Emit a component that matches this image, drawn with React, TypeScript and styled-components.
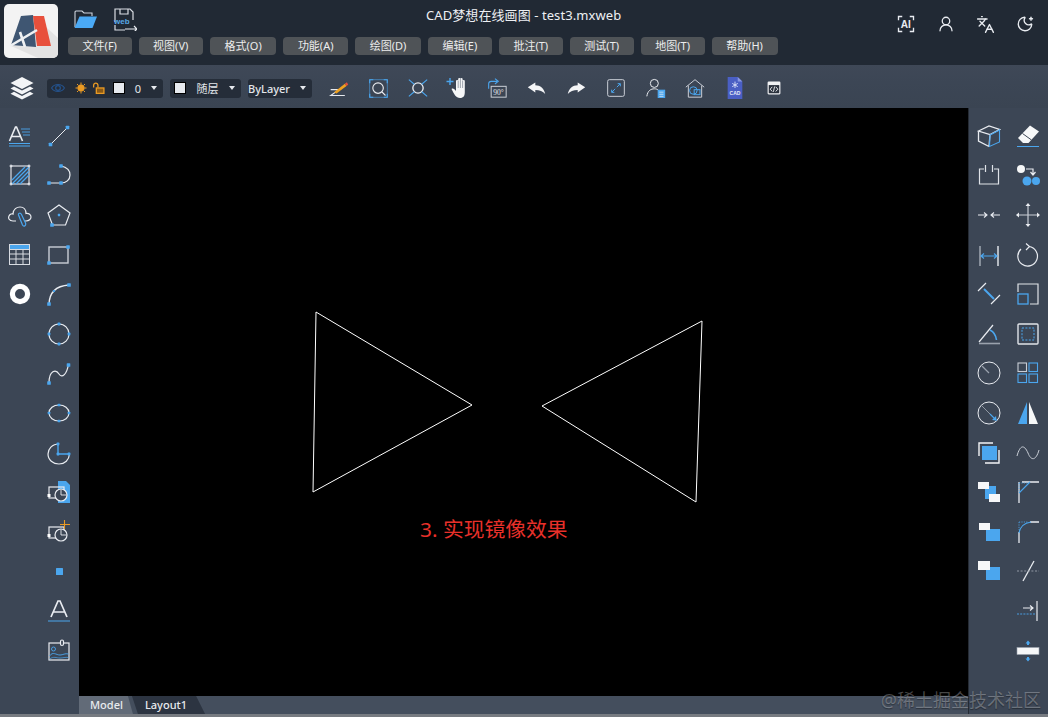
import React from 'react';
import styled, { createGlobalStyle } from 'styled-components';
import { Languages, MoonStar, UserRound } from 'lucide-react';

const WHITE = '#e9ecf1';
const BLUE = '#4ba6ee';
const DARK = '#212934';
const PANEL = '#3c4655';

const GlobalStyle = createGlobalStyle`
  html, body {
    margin: 0;
    height: 100%;
    overflow: hidden;
    background: ${DARK};
  }
  body {
    font-family: "Noto Sans", "Noto Sans CJK SC", sans-serif;
  }
`;

const Page = styled.div`
  display: flex;
  flex-direction: column;
  height: 717px;
  width: 1048px;
`;

/* top title bar */
const Header = styled.header`
  display: flex;
  height: 65px;
  flex: none;
  background: ${DARK};
  box-sizing: border-box;
  padding: 4px 0 0 4px;
  gap: 10px;
`;

const Logo = styled.div`
  width: 54px;
  height: 54px;
  border-radius: 5px;
  background: #f3f3f3;
  overflow: hidden;
`;

const HeaderBody = styled.div`
  flex: 1;
  display: flex;
  flex-direction: column;
`;

const TitleRow = styled.div`
  display: grid;
  grid-template-columns: 358px auto 1fr;
  align-items: start;
  height: 33px;
`;

const FileIcons = styled.div`
  display: flex;
  gap: 16px;
  padding: 3px 0 0 5px;
`;

const Title = styled.div`
  color: #eef0f3;
  font-size: 13px;
  letter-spacing: 0.08px;
  line-height: 22px;
  white-space: nowrap;
`;

const HeaderActions = styled.div`
  display: flex;
  justify-content: flex-end;
  padding: 10px 3px 0 0;
`;

const HeaderAction = styled.div`
  width: 39.6px;
  height: 20px;
  display: flex;
  align-items: center;
  justify-content: center;
  color: ${WHITE};
`;

const MenuBar = styled.nav`
  display: flex;
  gap: 7px;
`;

const MenuButton = styled.button`
  height: 18px;
  padding: 0 14.6px;
  border: 0;
  border-radius: 4px;
  background: #4f5357;
  color: #eceded;
  font-family: inherit;
  font-size: 11px;
  line-height: 18px;
  white-space: nowrap;
`;

/* second row */
const Toolbar = styled.div`
  display: flex;
  align-items: center;
  height: 43px;
  flex: none;
  box-sizing: border-box;
  background: linear-gradient(#3f4857, ${PANEL} 40%, #3a4452);
  padding: 4px 0 1px 10px;
`;

const LayersButton = styled.div`
  width: 24px;
  height: 24px;
  margin-right: 13px;
`;

const SelectBox = styled.div<{ $width: number; $flush?: boolean }>`
  display: flex;
  align-items: center;
  width: ${p => p.$width}px;
  height: 19px;
  box-sizing: border-box;
  margin-right: 7px;
  padding: 0 6px 0 ${p => (p.$flush ? 0 : 4)}px;
  background: #252d39;
  border-radius: 3px;
  color: #e3e6ea;
  font-size: 11px;
`;

const LayerFlag = styled.span<{ $gap: number }>`
  display: flex;
  flex: none;
  margin-right: ${p => p.$gap}px;
`;

const Swatch = styled.span`
  width: 12px;
  height: 12px;
  flex: none;
  box-sizing: border-box;
  background: #e6e9ee;
  border: 1px solid #000;
`;

const SelectLabel = styled.span<{ $plain?: boolean }>`
  flex: 1;
  text-align: ${p => (p.$plain ? 'left' : 'center')};
  font-weight: ${p => (p.$plain ? 500 : 400)};
`;

const Caret = styled.span`
  flex: none;
  width: 0;
  height: 0;
  border-left: 3.5px solid transparent;
  border-right: 3.5px solid transparent;
  border-top: 4px solid #e6e9ee;
`;

const ToolButton = styled.div`
  width: 39.6px;
  height: 24px;
  flex: none;
  display: flex;
  align-items: center;
  justify-content: center;
`;

/* work area */
const Workspace = styled.div`
  flex: 1;
  display: flex;
  min-height: 0;
`;

const SidePanel = styled.aside<{ $width: number; $right?: boolean }>`
  display: flex;
  flex: none;
  width: ${p => p.$width}px;
  box-sizing: border-box;
  padding-top: 8px;
  background: ${PANEL};
  ${p => (p.$right ? 'border-left: 1px solid #252b34;' : '')}
`;

const ToolColumn = styled.div`
  width: 39.5px;
  display: flex;
  flex-direction: column;
`;

const SideTool = styled.div`
  height: 39.6px;
  flex: none;
  display: flex;
  align-items: center;
  justify-content: center;
`;

const CanvasColumn = styled.main`
  flex: 1;
  display: flex;
  flex-direction: column;
  min-width: 0;
`;

const Canvas = styled.div`
  flex: 1;
  position: relative;
  background: #000;
`;

const Sketch = styled.svg`
  display: block;
  width: 100%;
  height: 100%;
`;

const Annotation = styled.div`
  position: absolute;
  left: 341px;
  top: 406px;
  color: #e8302a;
  font-size: 20.8px;
  line-height: 30px;
  white-space: nowrap;
`;

const TabBar = styled.div`
  display: flex;
  height: 18px;
  flex: none;
  background: #444e5d;
`;

const LayoutTab = styled.div<{ $active?: boolean }>`
  height: 18px;
  box-sizing: border-box;
  padding: ${p => (p.$active ? '0 10px 0 11px' : '0 18px 0 13px')};
  margin-left: ${p => (p.$active ? 0 : -1)}px;
  background: ${p => (p.$active ? '#626b78' : '#2c3441')};
  color: #e8eaee;
  font-size: 11px;
  font-weight: 500;
  line-height: 17px;
  clip-path: ${p =>
    p.$active
      ? 'polygon(0 0, calc(100% - 5px) 0, 100% 100%, 0 100%)'
      : 'polygon(0 0, calc(100% - 9px) 0, 100% 100%, 6px 100%)'};
`;

const BottomEdge = styled.div`
  height: 3px;
  flex: none;
  background: #777b81;
`;

const Watermark = styled.div`
  position: absolute;
  right: 7px;
  bottom: 5px;
  color: rgba(255, 255, 255, 0.28);
  font-size: 18px;
  line-height: 24px;
  white-space: nowrap;
  text-shadow: 0 1px 1px rgba(0, 0, 0, 0.35);
  pointer-events: none;
`;

const Frame = styled.div`
  position: relative;
`;

const Svg = ({ size = 24, children }: { size?: number; children: React.ReactNode }) => (
  <svg width={size} height={size} viewBox="0 0 24 24" fill="none" stroke={WHITE} strokeWidth={1.2}>
    {children}
  </svg>
);

const Dot = ({ x, y, r = 1.8 }: { x: number; y: number; r?: number }) => (
  <rect x={x - r} y={y - r} width={r * 2} height={r * 2} rx={0.6} fill={BLUE} stroke="none" />
);

const LogoMark = () => (
  <svg width={54} height={54} viewBox="0 0 54 54">
    <path d="M29 11 L54 34 V54 H34 L7 42Z" fill="#e3e3e3" />
    <path d="M17 12 L29 11 L32 43 L7 41Z" fill="#3f5672" />
    <path d="M29 12 L40 12 L47 42 L33 42Z" fill="#e8503c" />
    <path d="M6 42 L33 26" stroke="#eef0f2" strokeWidth={2.6} />
    <path d="M16 28 L21 43" stroke="#eef0f2" strokeWidth={2.6} />
  </svg>
);

const icons: Record<string, React.ReactNode> = {
  folder: (
    <Svg size={24}>
      <path d="M2 20 V5 a1 1 0 0 1 1-1 h6 l2 2 h8 v3" stroke="#cfd6df" strokeWidth={1.1} />
      <path d="M6.5 9.5 H24 L19.5 21 H1.5Z" fill="#4aa9f5" stroke="none" />
    </Svg>
  ),
  save: (
    <Svg size={24}>
      <path d="M2 15 V2 H17 L20 5 V13 M2 18 V23 H12" stroke="#d9dde3" />
      <path d="M7 2 V7 H15 V2" stroke="#d9dde3" />
      <text x={1} y={17} fontSize={8} fontWeight={700} fill="#58a8e8" stroke="none" fontFamily="Liberation Sans">web</text>
      <path d="M12 22 H24 M21 19 L24 22 L21 25" stroke="#e9ecf1" />
    </Svg>
  ),
  ai: (
    <Svg size={18}>
      <path d="M2 7 V2 H7 M17 2 H22 V7 M22 17 V22 H17 M7 22 H2 V17" strokeWidth={1.8} />
      <text x={5} y={17} fontSize={13.5} fontWeight={700} fill={WHITE} stroke="none" fontFamily="Liberation Sans">AI</text>
    </Svg>
  ),
  layers: (
    <svg width={24} height={24} viewBox="0 0 24 24" fill="#f4f5f7">
      <path d="M12 1 L23.5 7 L12 13 L.5 7Z" />
      <path d="M4 10.5 L12 14.6 L20 10.5 L23.5 12.4 L12 18.4 L.5 12.4Z" />
      <path d="M4 15.8 L12 20 L20 15.8 L23.5 17.8 L12 23.6 L.5 17.8Z" />
    </svg>
  ),
  eye: (
    <svg width={14} height={14} viewBox="0 0 24 24" fill="none" stroke="#24528c" strokeWidth={2}>
      <path d="M1 12 C6 4 18 4 23 12 C18 20 6 20 1 12Z" />
      <circle cx={12} cy={12} r={4} />
    </svg>
  ),
  sun: (
    <svg width={12} height={12} viewBox="0 0 24 24" stroke="#e99a24" strokeWidth={2} fill="#e99a24">
      <circle cx={12} cy={12} r={6.5} />
      <path d="M12 1 V4 M12 20 V23 M1 12 H4 M20 12 H23 M4 4 L6 6 M18 18 L20 20 M4 20 L6 18 M18 6 L20 4" />
    </svg>
  ),
  lock: (
    <svg width={13} height={13} viewBox="0 0 24 24" fill="none" stroke="#e99a24" strokeWidth={2.4}>
      <path d="M3 10 V6 a4 4 0 0 1 8 0 V10" />
      <rect x={8} y={11} width={14} height={10} fill="#8a5a16" />
    </svg>
  ),
  pen: (
    <Svg size={20}>
      <path d="M2 14 H12 L2 21 H19" stroke="#e6e9ee" strokeWidth={1.4} />
      <path d="M6 17 L19 7 L21 9.5 L9 18.5Z" fill="#efa11f" stroke="none" />
      <path d="M19 7 L21.5 5 L23 8 L21 9.5Z" fill="#e8503c" stroke="none" />
    </Svg>
  ),
  zoomWindow: (
    <Svg size={21}>
      <rect x={2} y={2} width={20} height={20} stroke={BLUE} strokeWidth={0.9} opacity={0.75} />
      <path d="M2 6 V2 H6 M18 2 H22 V6 M22 18 V22 H18 M6 22 H2 V18" stroke={BLUE} strokeWidth={1.3} />
      <circle cx={11.5} cy={11.5} r={6} strokeWidth={1.3} />
      <path d="M16 16 L20 20" strokeWidth={1.3} />
    </Svg>
  ),
  zoomExtent: (
    <Svg size={20}>
      <circle cx={12} cy={12} r={6.2} strokeWidth={1.6} />
      <path d="M1 2 L7.5 7.5 M23 2 L16.5 7.5 M1 22 L7.5 16.5 M23 22 L16.5 16.5" stroke={BLUE} strokeWidth={1.3} />
    </Svg>
  ),
  hand: (
    <Svg>
      <path d="M4 2 V9 M.5 5.5 H7.5" stroke={BLUE} strokeWidth={1.4} />
      <path d="M10 11 V5 a1 1 0 0 1 2.2 0 V3 a1 1 0 0 1 2.2 0 V3 a1 1 0 0 1 2.2 0 V5 a1 1 0 0 1 2.2 0 V15 C19 20 17.5 22 14 22 C10 22 8 18 5.5 13 C7 12 8.5 13 10 15Z" fill="#f6f7f8" stroke="none" />
      <path d="M12.2 5 V12 M14.4 3 V12 M16.6 5 V12" stroke="#7b8490" strokeWidth={0.7} />
    </Svg>
  ),
  rotate90: (
    <Svg size={20}>
      <path d="M2 13 V7 a3 3 0 0 1 3-3 H12 M9.5 0.8 L13.5 4 L9.5 7.2" stroke={BLUE} strokeWidth={1.3} />
      <rect x={5} y={10} width={18} height={13} stroke="#c9ced6" />
      <text x={7.5} y={20.5} fontSize={9} fill="#e6e9ee" stroke="none" fontFamily="Liberation Serif">90°</text>
    </Svg>
  ),
  undo: (
    <svg width={19} height={19} viewBox="0 0 24 24" fill="#f4f5f7">
      <path d="M1 10.5 L10.5 4.5 V8 C17 8 21.5 12 23 19 C20 15.5 16 14 10.5 14 V17Z" />
    </svg>
  ),
  redo: (
    <svg width={19} height={19} viewBox="0 0 24 24" fill="#f4f5f7">
      <path d="M23 10.5 L13.5 4.5 V8 C7 8 2.5 12 1 19 C4 15.5 8 14 13.5 14 V17Z" />
    </svg>
  ),
  fullscreen: (
    <Svg size={20}>
      <rect x={2} y={2} width={20} height={20} rx={2} stroke="#c9ced6" strokeWidth={1.2} />
      <path d="M7 17 L11 13 M13 11 L17 7 M14 6.8 H17.2 V10 M6.8 14 V17.2 H10" stroke={BLUE} strokeWidth={1.2} />
    </Svg>
  ),
  userList: (
    <Svg size={20}>
      <circle cx={10} cy={6.5} r={4.8} />
      <path d="M1 22 C2 15 6 13 10 13 C12 13 14 13.5 15 15" />
      <rect x={14} y={14} width={9} height={10} fill={BLUE} stroke="none" />
      <path d="M16 17 H21 M16 19.5 H21 M16 22 H21" stroke="#e9ecf1" strokeWidth={0.9} />
    </Svg>
  ),
  house: (
    <Svg size={20}>
      <path d="M1 11 L12 2 L23 11 M4 9 V23 H20 V9" stroke="#c9ced6" />
      <circle cx={10} cy={15} r={4.5} stroke={BLUE} />
      <rect x={11} y={14} width={7} height={6} stroke={BLUE} />
    </Svg>
  ),
  cadFile: (
    <svg width={22} height={22} viewBox="0 0 24 24">
      <path d="M4 0 H15 L20 5 V24 H4Z" fill="#4a5fc4" />
      <path d="M15 0 L20 5 H15Z" fill="#8b99e2" />
      <path d="M12 5 V12 M9 7 L15 10.5 M15 7 L9 10.5" stroke="#dbe1f8" strokeWidth={1} />
      <text x={12} y={20} fontSize={5.5} fontWeight={700} textAnchor="middle" fill="#e8ebf9" fontFamily="Liberation Sans">CAD</text>
    </svg>
  ),
  code: (
    <svg width={14} height={14} viewBox="0 0 24 24" fill="none">
      <rect x={1} y={1} width={22} height={22} rx={2} fill="#f0f1f3" />
      <rect x={3} y={7} width={18} height={14} fill="#2b323d" />
      <path d="M9 10 L5.5 14 L9 18 M15 10 L18.5 14 L15 18 M13 9.5 L11 18.5" stroke="#f0f1f3" strokeWidth={1.6} />
    </svg>
  ),

  textStyle: (
    <Svg>
      <path d="M1.5 17 L7.5 3 H8.5 L14.5 17 M4 12.5 H12" strokeWidth={1.6} />
      <path d="M13 5 H22 M14 8 H22 M15 11 H22" stroke={BLUE} strokeWidth={0.9} />
      <path d="M1 19.5 H22 M1 22 H22" stroke={BLUE} strokeWidth={1} />
    </Svg>
  ),
  hatch: (
    <Svg>
      <rect x={3} y={3} width={18} height={18} strokeWidth={1.1} />
      <path d="M4 17 L17 4 M4 21 L21 4 M8 21 L21 8 M12 21 L21 12" stroke={BLUE} strokeWidth={1.3} />
      <path d="M1.5 3 H4.5 M3 1.5 V4.5 M19.5 3 H22.5 M21 1.5 V4.5 M1.5 21 H4.5 M3 19.5 V22.5 M19.5 21 H22.5 M21 19.5 V22.5" strokeWidth={1} />
    </Svg>
  ),
  cloud: (
    <Svg>
      <path d="M8 18 H5 C1 18 0 15 1 13 C2 11 4 10.5 5 11 C5 6 9 4 12 4 C16 4 18 7 18 10.5 C21 10 23 12 23 14 C23 16 21 18 18 18 H17" />
      <path d="M10.5 12 C10 10 12.5 9.5 13.5 11.5 L17.5 20 C18.5 23 15.5 24 14.5 22 L10.5 12Z" stroke={BLUE} />
    </Svg>
  ),
  table: (
    <svg width={21} height={21} viewBox="0 0 21 21" fill="none" stroke="#d8dce2" strokeWidth={1}>
      <rect x={0.5} y={0.5} width={20} height={20} />
      <rect x={0.5} y={0.5} width={20} height={5} fill={BLUE} stroke="#d8dce2" />
      <path d="M0 10 H21 M0 15 H21 M7 5 V21 M14 5 V21" />
    </svg>
  ),
  donut: (
    <svg width={22} height={22} viewBox="0 0 22 22" fill="none" stroke="#fff" strokeWidth={5.2}>
      <circle cx={11} cy={11} r={7.6} />
    </svg>
  ),
  line: (
    <Svg>
      <path d="M3 21 L21 3" strokeWidth={1} />
      <Dot x={3.5} y={20.5} /><Dot x={20.5} y={3.5} />
    </Svg>
  ),
  arcLine: (
    <Svg>
      <path d="M2 20 H14 C19 20 23 17 23 12 C23 7 19 4 14 3" />
      <Dot x={2} y={20} /><Dot x={14} y={20} /><Dot x={14} y={3} />
    </Svg>
  ),
  polygon: (
    <Svg>
      <path d="M12 2 L23 10 L18.5 22 H5.5 L1 10Z" />
      <Dot x={12} y={12} r={1.2} /><Dot x={5} y={22} />
    </Svg>
  ),
  rect: (
    <Svg>
      <rect x={2} y={4} width={19} height={16} stroke="#c9ced6" strokeWidth={1.4} />
      <Dot x={2} y={20} /><Dot x={21} y={4} />
    </Svg>
  ),
  curve: (
    <Svg>
      <path d="M2 23 C2 12 8 4 22 3" strokeWidth={1.4} />
      <Dot x={2} y={22} /><Dot x={22} y={3} /><Dot x={7} y={9} r={1.1} />
    </Svg>
  ),
  circle: (
    <Svg>
      <circle cx={12} cy={12} r={10} />
      <Dot x={12} y={2} r={1.4} /><Dot x={2} y={12} r={1.4} /><Dot x={22} y={12} r={1.4} /><Dot x={12} y={22} r={1.4} />
    </Svg>
  ),
  spline: (
    <Svg>
      <path d="M2 22 C2 9 9 8 12 13 C15 18 20 13 21.5 3" />
      <Dot x={2} y={22} /><Dot x={21.5} y={4} />
    </Svg>
  ),
  ellipse: (
    <Svg>
      <ellipse cx={12} cy={12} rx={10} ry={8} />
      <Dot x={2} y={12} r={1.3} /><Dot x={22} y={12} r={1.3} /><Dot x={12} y={20} r={1.3} /><Dot x={12} y={4} r={1.3} />
    </Svg>
  ),
  pie: (
    <Svg>
      <path d="M12 3 C5 3 1 8 1 13 C1 19 6 23 12 23 C18 23 22 19 22.5 13" />
      <path d="M11 3 V13 H21" stroke={BLUE} strokeWidth={1.4} />
      <Dot x={11} y={3} r={1.4} /><Dot x={11} y={13} r={1.4} /><Dot x={22} y={13} r={1.4} />
    </Svg>
  ),
  blockFile: (
    <Svg>
      <path d="M11 1 H19 L23 5 V23 H11Z" fill={BLUE} stroke="none" />
      <rect x={2} y={7} width={15} height={11} />
      <circle cx={14} cy={15} r={6} fill={PANEL} />
      <path d="M14 9.5 V15 H19.5" strokeWidth={0.9} />
      <rect x={0.5} y={14} width={3} height={3} fill="#fff" stroke="none" />
    </Svg>
  ),
  blockAdd: (
    <Svg>
      <rect x={2} y={7} width={15} height={11} />
      <circle cx={14} cy={15} r={6} fill={PANEL} />
      <path d="M14 9.5 V15 H19.5" strokeWidth={0.9} />
      <rect x={0.5} y={14} width={3} height={3} fill="#fff" stroke="none" />
      <path d="M17.5 0 V9 M13 4.5 H23" stroke="#e99a24" strokeWidth={1.1} />
    </Svg>
  ),
  point: (
    <svg width={7} height={7} viewBox="0 0 7 7"><rect width={7} height={7} rx={0.5} fill={BLUE} /></svg>
  ),
  textA: (
    <Svg>
      <path d="M4 18 L11 2 H13 L20 18 M6.5 13 H17.5" strokeWidth={1.7} />
      <path d="M1 22 H23" stroke={BLUE} strokeWidth={1} />
    </Svg>
  ),
  image: (
    <Svg>
      <rect x={2} y={4} width={20} height={17} />
      <rect x={13.5} y={1} width={3} height={5.5} rx={1.5} fill={PANEL} />
      <circle cx={6.5} cy={10} r={2} stroke={BLUE} strokeWidth={0.9} />
      <path d="M2.5 17 C6 12 9 16 13 16 C16 16 18 14 21.5 15" stroke={BLUE} strokeWidth={0.9} />
      <path d="M2.5 20 C7 17 9 19 13 19 C16 19 18 18 21.5 18.5" stroke={BLUE} strokeWidth={0.7} />
    </Svg>
  ),

  cube: (
    <Svg>
      <path d="M1.5 7 L12 2 L22.5 5.5 L13 10.5Z M1.5 7 V17 L12 22.5 M13 10.5 L12 22.5" strokeWidth={1.3} />
      <path d="M13 11 L22.5 6 V18 L12.5 22.5Z" stroke={BLUE} strokeWidth={1.1} />
    </Svg>
  ),
  eraser: (
    <svg width={24} height={24} viewBox="0 0 24 24" fill="none">
      <path d="M2 14 L14 1.5 L23 7.5 L12.5 19 H7Z" fill="#f6f7f8" />
      <path d="M6.5 9.5 L15.5 16" stroke={PANEL} strokeWidth={1} />
      <path d="M1 22.5 H23" stroke={BLUE} strokeWidth={1} />
    </svg>
  ),
  trim: (
    <Svg>
      <path d="M7 6 H2.5 V21 H21.5 V6 H17 M8.5 2 V9 M15.5 2 V9" strokeWidth={1.2} stroke="#dfe3e8" />
    </Svg>
  ),
  group: (
    <Svg>
      <circle cx={5} cy={6} r={4} fill="#f6f7f8" stroke="none" />
      <path d="M10 6 H17 V11 M14.5 9 L17 12 L19.5 9" strokeWidth={1.2} />
      <circle cx={11} cy={18} r={4.5} fill={BLUE} stroke="none" />
      <circle cx={20} cy={18} r={4} fill={BLUE} stroke="none" />
    </Svg>
  ),
  merge: (
    <Svg>
      <path d="M1 12 H10 M7 9.5 L10 12 L7 14.5 M23 12 H14 M17 9.5 L14 12 L17 14.5" strokeWidth={1.1} />
    </Svg>
  ),
  move: (
    <Svg>
      <path d="M12 1 V23 M1 12 H23" stroke="#c9ced6" strokeWidth={1.2} />
      <path d="M12 0 L14.5 3 H9.5Z M12 24 L14.5 21 H9.5Z M0 12 L3 9.5 V14.5Z M24 12 L21 9.5 V14.5Z" fill={WHITE} stroke="none" />
    </Svg>
  ),
  dimLinear: (
    <Svg>
      <path d="M3 3 V23" stroke="#9aa2ad" strokeWidth={1.6} />
      <path d="M21 3 V23" strokeWidth={1.4} />
      <path d="M4 13 H20 M7 10.5 L4 13 L7 15.5 M17 10.5 L20 13 L17 15.5" stroke={BLUE} strokeWidth={1.2} />
    </Svg>
  ),
  rotate: (
    <Svg>
      <path d="M13 3.5 A9.8 9.8 0 1 1 5 6" strokeWidth={1.2} />
      <path d="M10 .5 L13.5 3.5 L10 7" strokeWidth={1.2} />
    </Svg>
  ),
  dimAligned: (
    <Svg>
      <path d="M1 9 L9 1 M14 22 L23 13" strokeWidth={1.2} />
      <path d="M7 7 L17 17" stroke={BLUE} strokeWidth={2} />
    </Svg>
  ),
  scale: (
    <Svg>
      <path d="M2 10 V2 H22 V22 H14" stroke="#dfe3e8" strokeWidth={1.2} />
      <rect x={2} y={12} width={10} height={10} stroke={BLUE} strokeWidth={1.3} />
    </Svg>
  ),
  dimAngle: (
    <Svg>
      <path d="M2 20 L16 3" strokeWidth={1.2} />
      <path d="M2 21.5 H23" stroke="#9aa2ad" strokeWidth={1.6} />
      <path d="M13 8 C17 10 19 14 19.5 18" stroke={BLUE} strokeWidth={1.6} />
    </Svg>
  ),
  frame: (
    <Svg>
      <rect x={2} y={2} width={20} height={20} rx={1} stroke="#dfe3e8" strokeWidth={1.4} />
      <rect x={6} y={6} width={12} height={12} stroke={BLUE} strokeWidth={1} strokeDasharray="2 1.4" />
    </Svg>
  ),
  radius: (
    <Svg>
      <circle cx={12} cy={12} r={11} strokeWidth={1} />
      <path d="M5 5 L12 12" stroke="#9aa2ad" strokeWidth={1.3} />
    </Svg>
  ),
  array: (
    <Svg>
      <rect x={2} y={2} width={8.5} height={8.5} stroke="#c9ced6" strokeWidth={1.1} />
      <rect x={13} y={2} width={8.5} height={8.5} stroke={BLUE} strokeWidth={1.1} />
      <rect x={2} y={13} width={8.5} height={8.5} stroke={BLUE} strokeWidth={1.1} />
      <rect x={13} y={13} width={8.5} height={8.5} stroke={BLUE} strokeWidth={1.1} />
    </Svg>
  ),
  diameter: (
    <Svg>
      <circle cx={12} cy={12} r={11} strokeWidth={1} />
      <path d="M4.5 4.5 L19.5 19.5" stroke="#9aa2ad" strokeWidth={0.9} />
      <path d="M13 13 L19.5 19.5" stroke={BLUE} strokeWidth={1.1} />
      <path d="M15 19 L19.5 19.5 L19 15" fill={BLUE} stroke="none" />
    </Svg>
  ),
  mirror: (
    <svg width={24} height={24} viewBox="0 0 24 24">
      <path d="M11 1 V23 H2Z" fill={BLUE} />
      <path d="M13 1 V23 H22Z" fill="#f6f7f8" />
    </svg>
  ),
  overlayA: (
    <svg width={24} height={24} viewBox="0 0 24 24" fill="none">
      <path d="M2 15 V2 H16 M8 22 H22 V9" stroke="#f2f4f6" strokeWidth={1.4} />
      <rect x={5} y={5} width={15} height={14} fill={BLUE} />
    </svg>
  ),
  overlayB: (
    <svg width={24} height={24} viewBox="0 0 24 24">
      <rect x={8} y={6} width={11} height={13} fill={BLUE} />
      <rect x={1} y={2} width={11} height={7} fill="#f6f7f8" />
      <rect x={12} y={14} width={11} height={8} fill="#f6f7f8" />
    </svg>
  ),
  overlayC: (
    <svg width={24} height={24} viewBox="0 0 24 24">
      <rect x={9} y={9} width={14} height={12} fill={BLUE} />
      <rect x={2} y={3} width={11} height={7} fill="#f6f7f8" />
    </svg>
  ),
  overlayD: (
    <svg width={24} height={24} viewBox="0 0 24 24">
      <rect x={9} y={8} width={14} height={13} fill={BLUE} />
      <rect x={1} y={2} width={12} height={9} fill="#f6f7f8" />
    </svg>
  ),
  sine: (
    <Svg>
      <path d="M1 15 C4 4 8 3 12 12 C15 20 20 20 23 9" stroke="#c9ced6" strokeWidth={1} />
    </Svg>
  ),
  fillet: (
    <Svg>
      <path d="M3 23 V2 M6 2 H23" strokeWidth={1.3} />
      <path d="M3 13 L14 2" stroke={BLUE} strokeWidth={1.1} />
      <path d="M3 3 V11 M3 3 H12" stroke={BLUE} strokeWidth={0.8} strokeDasharray="1.2 1.2" />
    </Svg>
  ),
  chamfer: (
    <Svg>
      <path d="M3 23 V12 M14 2 H23" strokeWidth={1.3} />
      <path d="M3 13 C4 7 8 3 15 2" stroke={BLUE} strokeWidth={1.1} />
      <path d="M3 2 V10 M3 2 H12" stroke={BLUE} strokeWidth={0.8} strokeDasharray="1.2 1.2" />
    </Svg>
  ),
  breakLine: (
    <Svg>
      <path d="M7 22 L18 2" strokeWidth={1.3} />
      <path d="M1 12 H23" stroke="#9aa2ad" strokeWidth={0.9} strokeDasharray="2 1.6" />
    </Svg>
  ),
  extend: (
    <Svg>
      <path d="M21 2 V22" strokeWidth={1.2} />
      <path d="M7 9 H17 M14 6.5 L17 9 L14 11.5" strokeWidth={1.2} />
      <path d="M1 15 H19" stroke={BLUE} strokeWidth={0.9} strokeDasharray="2 1.2" />
    </Svg>
  ),
  offset: (
    <svg width={24} height={24} viewBox="0 0 24 24">
      <rect x={1} y={8.5} width={22} height={7} fill="#f6f7f8" stroke="#9aa2ad" strokeWidth={0.6} />
      <path d="M12 1.5 L14.5 4.5 H13 V6 H11 V4.5 H9.5Z M12 22.5 L14.5 19.5 H13 V18 H11 V19.5 H9.5Z" fill={BLUE} />
    </svg>
  ),
};

const menus = ['文件(F)', '视图(V)', '格式(O)', '功能(A)', '绘图(D)', '编辑(E)', '批注(T)', '测试(T)', '地图(T)', '帮助(H)'];
const toolbarTools = ['pen', 'zoomWindow', 'zoomExtent', 'hand', 'rotate90', 'undo', 'redo', 'fullscreen', 'userList', 'house', 'cadFile', 'code'];

const leftColumns = [
  ['textStyle', 'hatch', 'cloud', 'table', 'donut'],
  ['line', 'arcLine', 'polygon', 'rect', 'curve', 'circle', 'spline', 'ellipse', 'pie', 'blockFile', 'blockAdd', 'point', 'textA', 'image'],
];
const rightColumns = [
  ['cube', 'trim', 'merge', 'dimLinear', 'dimAligned', 'dimAngle', 'radius', 'diameter', 'overlayA', 'overlayB', 'overlayC', 'overlayD'],
  ['eraser', 'group', 'move', 'rotate', 'scale', 'frame', 'array', 'mirror', 'sine', 'fillet', 'chamfer', 'breakLine', 'extend', 'offset'],
];

const ToolColumns = ({ columns }: { columns: string[][] }) => (
  <>
    {columns.map((col, i) => (
      <ToolColumn key={i}>
        {col.map(name => (
          <SideTool key={name}>{icons[name]}</SideTool>
        ))}
      </ToolColumn>
    ))}
  </>
);

const App = () => (
  <Frame>
    <GlobalStyle />
    <Page>
      <Header>
        <Logo><LogoMark /></Logo>
        <HeaderBody>
          <TitleRow>
            <FileIcons>
              {icons.folder}
              {icons.save}
            </FileIcons>
            <Title>CAD梦想在线画图 - test3.mxweb</Title>
            <HeaderActions>
              <HeaderAction>{icons.ai}</HeaderAction>
              <HeaderAction><UserRound size={18} strokeWidth={1.7} /></HeaderAction>
              <HeaderAction><Languages size={19} strokeWidth={1.7} /></HeaderAction>
              <HeaderAction><MoonStar size={18} strokeWidth={1.8} /></HeaderAction>
            </HeaderActions>
          </TitleRow>
          <MenuBar>
            {menus.map(m => <MenuButton key={m}>{m}</MenuButton>)}
          </MenuBar>
        </HeaderBody>
      </Header>

      <Toolbar>
        <LayersButton>{icons.layers}</LayersButton>
        <SelectBox $width={116}>
          <LayerFlag $gap={10}>{icons.eye}</LayerFlag>
          <LayerFlag $gap={5}>{icons.sun}</LayerFlag>
          <LayerFlag $gap={8}>{icons.lock}</LayerFlag>
          <Swatch />
          <SelectLabel>0</SelectLabel>
          <Caret />
        </SelectBox>
        <SelectBox $width={71}>
          <Swatch />
          <SelectLabel>随层</SelectLabel>
          <Caret />
        </SelectBox>
        <SelectBox $width={64} $flush>
          <SelectLabel $plain>ByLayer</SelectLabel>
          <Caret />
        </SelectBox>
        {toolbarTools.map(t => <ToolButton key={t}>{icons[t]}</ToolButton>)}
      </Toolbar>

      <Workspace>
        <SidePanel $width={79}>
          <ToolColumns columns={leftColumns} />
        </SidePanel>
        <CanvasColumn>
          <Canvas>
            <Sketch viewBox="0 0 889 588" fill="none" stroke="#fff" strokeWidth={1}>
              <path d="M237 204 L393 297 L234 384Z" />
              <path d="M623 213 L463 298 L617 394Z" />
            </Sketch>
            <Annotation>3. 实现镜像效果</Annotation>
          </Canvas>
          <TabBar>
            <LayoutTab $active>Model</LayoutTab>
            <LayoutTab>Layout1</LayoutTab>
          </TabBar>
        </CanvasColumn>
        <SidePanel $width={80} $right>
          <ToolColumns columns={rightColumns} />
        </SidePanel>
      </Workspace>
      <BottomEdge />
    </Page>
    <Watermark>@稀土掘金技术社区</Watermark>
  </Frame>
);

export default App;
